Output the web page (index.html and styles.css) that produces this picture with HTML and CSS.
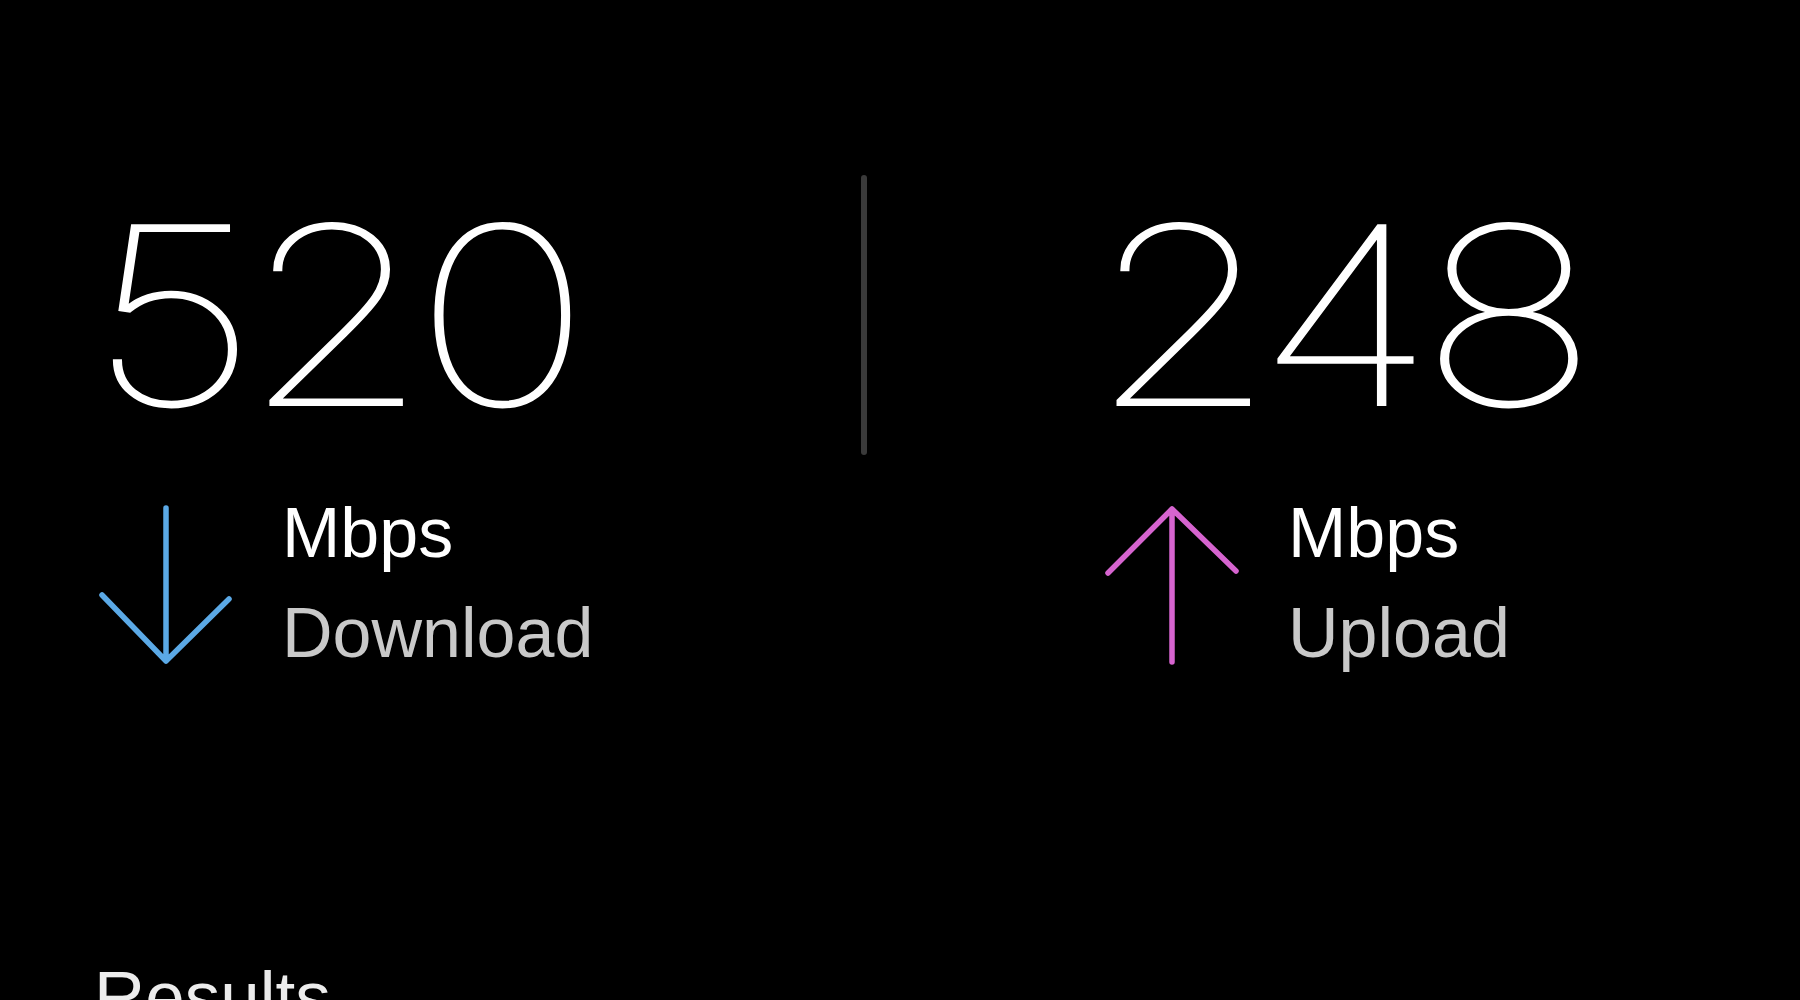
FILE: index.html
```html
<!DOCTYPE html>
<html lang="en">

<head>
	<title>Speed Test</title>
	<link rel="stylesheet" href="styles.css">
</head>

<body>

	<main class="speed">
		<div class="value"><span class="digits">520</span></div>
		<div class="divider"></div>
		<div class="value value-right"><span class="digits">248</span></div>

		<div class="meta">
			<svg class="arrow" width="134" height="162" viewBox="0 0 134 162">
				<path d="M67 3 L67 156 M3 90 L67 156 L130 94" stroke="#5ba9e6" />
			</svg>
			<div class="labels">
				<span class="unit">Mbps</span>
				<span class="kind">Download</span>
			</div>
		</div>
		<div></div>
		<div class="meta meta-right">
			<svg class="arrow" width="134" height="162" viewBox="0 0 134 162">
				<path d="M67 4 L67 157 M3 68 L67 4 L131 66" stroke="#d664cf" />
			</svg>
			<div class="labels">
				<span class="unit">Mbps</span>
				<span class="kind">Upload</span>
			</div>
		</div>
	</main>

	<h2 class="results">Results</h2>

</body>

</html>
```

FILE: styles.css
```css
:root {
	--background-color: #000000;
	--text-color: #ffffff;
	--muted-color: #c9c9c9;
	--divider-color: #3a3a3a;
}
body { margin: 0; background: var(--background-color); color: var(--text-color); font-family: "Liberation Sans", Arial, sans-serif; overflow: hidden;}

.speed {
	display: grid;
	grid-template-columns: 762px 6px 1fr;
	grid-template-rows: 280px auto;
	row-gap: 28px;
	padding: 175px 0 0 99px;
}
.value {
	align-self: center;
	font-family: Inter, sans-serif;
	font-weight: 100;
	font-size: 247px;
	line-height: 1;
	margin-left: -10px;
}
/* the original face has wider figures than Inter */
.digits { display: inline-block; letter-spacing: -12px; transform: scaleX(1.21); transform-origin: left center; -webkit-text-stroke: 2px currentColor;}
.value-right { padding-left: 233px;}
.divider { background: var(--divider-color); border-radius: 3px;}

.meta { display: flex; gap: 49px;}
.meta-right { padding-left: 238px;}
.arrow { margin-top: 22px; fill: none; stroke-width: 5.5; stroke-linecap: round; stroke-linejoin: round;}
.labels { display: flex; flex-direction: column; font-size: 70px; line-height: 100px;}
.unit { color: var(--text-color);}
.kind { color: var(--muted-color);}

.results {
	margin: 271px 0 0 94px;
	font-size: 71px;
	font-weight: normal;
	line-height: 1.2;
	color: #ececec;
}
```
